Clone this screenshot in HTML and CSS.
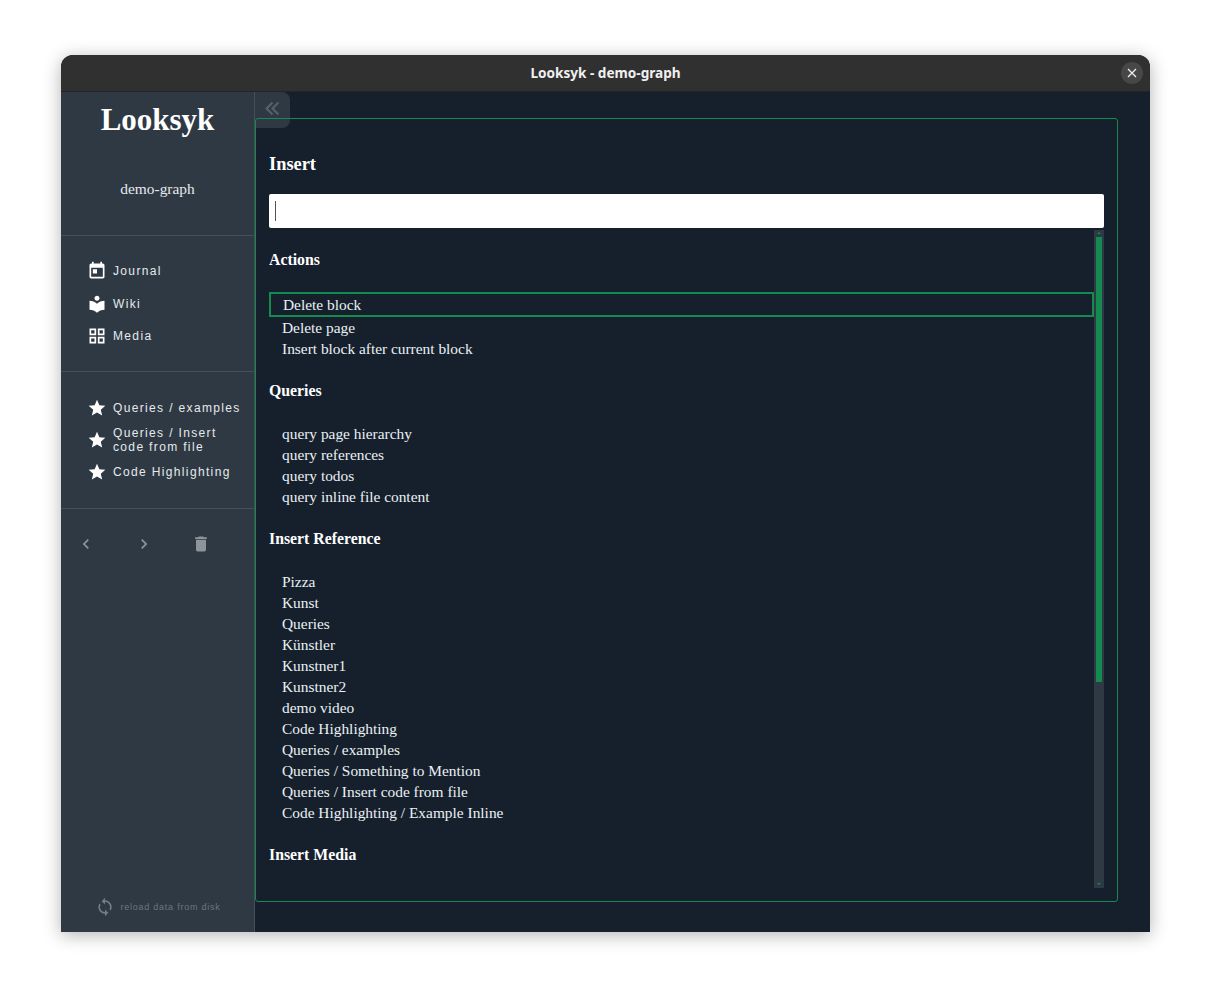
FILE: index.html
```html
<!DOCTYPE html>
<html lang="en">
<head>
<meta charset="utf-8">
<title>Looksyk - demo-graph</title>
<link rel="stylesheet" href="styles.css">
</head>
<body>
<div class="window">
  <header class="titlebar">
    <span class="title">Looksyk - demo-graph</span>
    <button class="close" aria-label="Close">
      <svg viewBox="0 0 12 12" width="12" height="12"><path d="M2 2l8 8M10 2l-8 8" stroke="#f2f2f2" stroke-width="1.2" fill="none"/></svg>
    </button>
  </header>
  <div class="body">
    <aside class="sidebar">
      <div class="brand">
        <div class="logo">Looksyk</div>
        <div class="graph">demo-graph</div>
      </div>
      <nav class="nav nav-main">
        <a class="nav-row"><svg class="icon" viewBox="0 0 24 24"><path d="M19 3h-1V1h-2v2H8V1H6v2H5c-1.11 0-1.99.9-1.99 2L3 19c0 1.1.89 2 2 2h14c1.1 0 2-.9 2-2V5c0-1.1-.9-2-2-2zm0 16H5V8h14v11zM7 10h5v5H7z"/></svg><span>Journal</span></a>
        <a class="nav-row"><svg class="icon" viewBox="0 0 24 24"><path d="M12 11.55C9.64 9.35 6.48 8 3 8v11c3.48 0 6.64 1.35 9 3.55 2.36-2.19 5.52-3.55 9-3.55V8c-3.48 0-6.64 1.35-9 3.55zM12 8c1.66 0 3-1.34 3-3s-1.34-3-3-3-3 1.34-3 3 1.34 3 3 3z"/></svg><span>Wiki</span></a>
        <a class="nav-row"><svg class="icon" viewBox="0 0 24 24"><path d="M3 3v8h8V3H3zm6 6H5V5h4v4zm-6 4v8h8v-8H3zm6 6H5v-4h4v4zm4-16v8h8V3h-8zm6 6h-4V5h4v4zm-6 4v8h8v-8h-8zm6 6h-4v-4h4v4z"/></svg><span>Media</span></a>
      </nav>
      <nav class="nav nav-fav">
        <a class="nav-row"><svg class="icon" viewBox="0 0 24 24"><path d="M12 17.27L18.18 21l-1.64-7.03L22 9.24l-7.19-.61L12 2 9.19 8.63 2 9.24l5.46 4.73L5.82 21z"/></svg><span>Queries / examples</span></a>
        <a class="nav-row"><svg class="icon" viewBox="0 0 24 24"><path d="M12 17.27L18.18 21l-1.64-7.03L22 9.24l-7.19-.61L12 2 9.19 8.63 2 9.24l5.46 4.73L5.82 21z"/></svg><span>Queries / Insert<br>code from file</span></a>
        <a class="nav-row"><svg class="icon" viewBox="0 0 24 24"><path d="M12 17.27L18.18 21l-1.64-7.03L22 9.24l-7.19-.61L12 2 9.19 8.63 2 9.24l5.46 4.73L5.82 21z"/></svg><span>Code Highlighting</span></a>
      </nav>
      <div class="tools">
        <svg class="icon" viewBox="0 0 24 24"><path d="M15.41 7.41L14 6l-6 6 6 6 1.41-1.41L10.83 12z"/></svg>
        <svg class="icon" viewBox="0 0 24 24"><path d="M10 6L8.59 7.41 13.17 12l-4.58 4.59L10 18l6-6z"/></svg>
        <svg class="icon" viewBox="0 0 24 24"><path d="M6 19c0 1.1.9 2 2 2h8c1.1 0 2-.9 2-2V7H6v12zM19 4h-3.5l-1-1h-5l-1 1H5v2h14V4z"/></svg>
      </div>
      <div class="reload">
        <svg class="icon" viewBox="0 0 24 24"><path d="M12 4V1L8 5l4 4V6c3.31 0 6 2.69 6 6 0 1.01-.25 1.97-.7 2.8l1.46 1.46C19.54 15.03 20 13.57 20 12c0-4.42-3.58-8-8-8zm0 14c-3.31 0-6-2.69-6-6 0-1.01.25-1.97.7-2.8L5.24 7.74C4.46 8.97 4 10.43 4 12c0 4.42 3.58 8 8 8v3l4-4-4-4v3z"/></svg>
        <span>reload data from disk</span>
      </div>
    </aside>
    <main class="main">
      <button class="collapse" aria-label="Collapse sidebar">
        <svg viewBox="0 0 16 16" width="19" height="19"><path d="M8 3L3 8l5 5M13 3L8 8l5 5" stroke="#56606c" stroke-width="1.8" fill="none"/></svg>
      </button>
      <section class="panel">
        <h1 class="panel-title">Insert</h1>
        <div class="input"><span class="caret"></span></div>
        <div class="results">
          <div class="list">
            <h2 class="group">Actions</h2>
            <ul class="items">
              <li class="item selected">Delete block</li>
              <li class="item">Delete page</li>
              <li class="item">Insert block after current block</li>
            </ul>
            <h2 class="group">Queries</h2>
            <ul class="items">
              <li class="item">query page hierarchy</li>
              <li class="item">query references</li>
              <li class="item">query todos</li>
              <li class="item">query inline file content</li>
            </ul>
            <h2 class="group">Insert Reference</h2>
            <ul class="items">
              <li class="item">Pizza</li>
              <li class="item">Kunst</li>
              <li class="item">Queries</li>
              <li class="item">Künstler</li>
              <li class="item">Kunstner1</li>
              <li class="item">Kunstner2</li>
              <li class="item">demo video</li>
              <li class="item">Code Highlighting</li>
              <li class="item">Queries / examples</li>
              <li class="item">Queries / Something to Mention</li>
              <li class="item">Queries / Insert code from file</li>
              <li class="item">Code Highlighting / Example Inline</li>
            </ul>
            <h2 class="group">Insert Media</h2>
          </div>
          <div class="scrollbar">
            <span class="arrow up"></span>
            <span class="thumb"></span>
            <span class="arrow down"></span>
          </div>
        </div>
      </section>
    </main>
  </div>
</div>
</body>
</html>
```
FILE: styles.css
```css
* { box-sizing: border-box; }
html, body { margin: 0; height: 100%; background: #fff; }
body { padding: 55px 61px 67px; overflow: hidden; }

.window {
  width: 1089px;
  height: 877px;
  display: flex;
  flex-direction: column;
  border-radius: 12px 12px 0 0;
  overflow: hidden;
  box-shadow: 0 3px 18px rgba(0, 0, 0, .3);
  background: #16202c;
}

.titlebar {
  position: relative;
  flex: 0 0 37px;
  display: flex;
  align-items: center;
  justify-content: center;
  background: #303030;
  border-bottom: 1px solid #252525;
}
.title {
  font: 700 13.6px/18px "Noto Sans", sans-serif;
  color: #f0f0f0;
}
.close {
  position: absolute;
  right: 7px;
  top: 7px;
  width: 22px;
  height: 22px;
  padding: 0;
  border: 0;
  border-radius: 50%;
  background: #474747;
  display: flex;
  align-items: center;
  justify-content: center;
}

.body { flex: 1; display: flex; min-height: 0; }

.sidebar {
  flex: 0 0 194px;
  display: flex;
  flex-direction: column;
  background: #2f3944;
  border-right: 1px solid #454e59;
  color: #e6e9ec;
}
.icon { width: 20px; height: 20px; flex: none; fill: #fff; }

.brand {
  height: 144px;
  padding-top: 8px;
  border-bottom: 1px solid #454e59;
  text-align: center;
}
.logo {
  font: 700 31px/40px "Liberation Serif", serif;
  color: #fff;
}
.graph {
  margin-top: 37px;
  font: 400 15.4px/24px "Liberation Serif", serif;
  color: #e6e9ec;
}

.nav {
  display: flex;
  flex-direction: column;
  padding: 25px 0 25px 26px;
  border-bottom: 1px solid #454e59;
}
.nav-main { gap: 12.5px; }
.nav-fav { gap: 8px; padding: 26px 0 26px 26px; }
.nav-row {
  display: flex;
  align-items: center;
  gap: 6px;
  font: 400 12px/14px "Liberation Sans", sans-serif;
  letter-spacing: 1.35px;
  white-space: nowrap;
}

.tools {
  display: flex;
  gap: 37.5px;
  padding: 25px 0 0 15px;
}
.tools .icon { fill: #8d949c; }

.reload {
  margin-top: auto;
  height: 50px;
  display: flex;
  align-items: center;
  justify-content: center;
  gap: 6px;
  padding: 0 0 1px;
  font: 400 9px/12px "Liberation Sans", sans-serif;
  letter-spacing: .75px;
  color: #6c757f;
}
.reload .icon { fill: #747c85; }

.main {
  position: relative;
  flex: 1;
  min-width: 0;
  padding: 26px 32px 30px 0;
}
.collapse {
  position: absolute;
  left: 0;
  top: 0;
  width: 35px;
  height: 36px;
  padding: 0 0 4px;
  border: 0;
  border-radius: 0 8px 8px 0;
  background: #2f3944;
  display: flex;
  align-items: center;
  justify-content: center;
}
.panel {
  position: relative;
  height: 100%;
  display: flex;
  flex-direction: column;
  padding: 33px 13px 13px;
  border: 1px solid #138a4f;
  border-radius: 3px;
  color: #eaf1f4;
  font-family: "Liberation Serif", serif;
}
.panel-title {
  margin: 0 0 18px;
  font: 700 18.4px/24px "Liberation Serif", serif;
  color: #fff;
}
.input {
  flex: 0 0 34px;
  display: flex;
  align-items: center;
  padding-left: 6px;
  background: #fff;
  border-radius: 2px;
}
.caret { width: 1px; height: 20px; background: #555; }

.results { flex: 1; min-height: 0; margin-top: 2px; display: flex; }
.list { flex: 1; min-width: 0; overflow: hidden; padding-top: 18px; }
.group {
  height: 22px;
  margin: 20px 0 22px;
  padding-top: 1px;
  font: 700 15.8px/22px "Liberation Serif", serif;
  color: #fff;
}
.group:first-child { margin-top: 0; }
.items { margin: 0; padding: 0; list-style: none; }
.item {
  height: 21px;
  padding-left: 13px;
  font-size: 15.4px;
  line-height: 21px;
}
.selected {
  height: 25px;
  padding-left: 12px;
  border: 2px solid #138a4f;
}

.scrollbar {
  flex: 0 0 10px;
  display: flex;
  flex-direction: column;
  align-items: center;
  background: #2f3944;
}
.thumb { width: 6px; height: 445px; background: #138a4f; }
.arrow { width: 0; height: 0; border-left: 2.5px solid transparent; border-right: 2.5px solid transparent; }
.up { margin: 2px 0 3px; border-bottom: 2px solid #138a4f; }
.down { margin: auto 0 3px; border-top: 2px solid #138a4f; }
```
